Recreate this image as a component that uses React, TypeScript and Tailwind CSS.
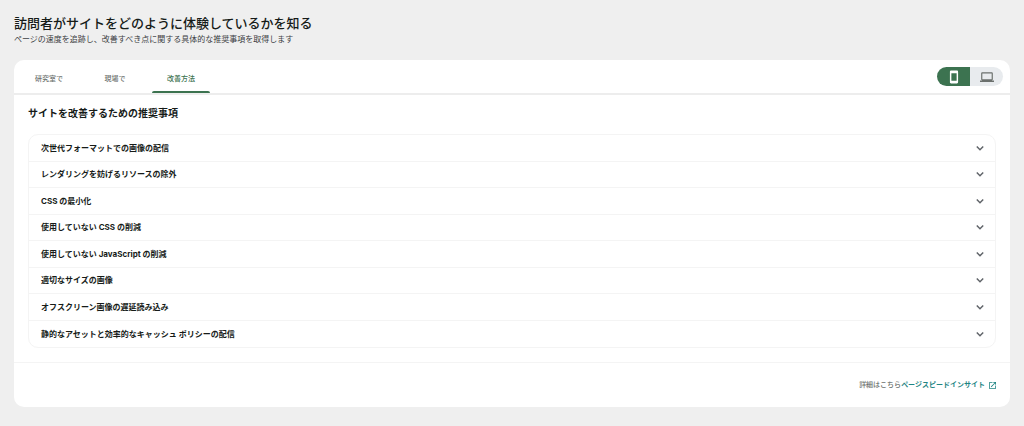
import { useState } from "react";
import clsx from "clsx";

const tabs = ["研究室で", "現場で", "改善方法"];

const recommendations = [
  "次世代フォーマットでの画像の配信",
  "レンダリングを妨げるリソースの除外",
  "CSS の最小化",
  "使用していない CSS の削減",
  "使用していない JavaScript の削減",
  "適切なサイズの画像",
  "オフスクリーン画像の遅延読み込み",
  "静的なアセットと効率的なキャッシュ ポリシーの配信",
];

const PhoneIcon = () => (
  <svg viewBox="0 0 24 24" className="w-3.5 h-3.5" fill="currentColor" aria-hidden="true">
    <path d="M17 1H7c-1.100 0-2 .9-2 2v18c0 1.100.9 2 2 2h10c1.100 0 2-.9 2-2V3c0-1.100-.9-2-2-2zm-.5 17.500h-9v-13h9v13z" />
  </svg>
);

const LaptopIcon = () => (
  <svg viewBox="0 0 24 24" className="w-3.5 h-3.5" fill="currentColor" aria-hidden="true">
    <path d="M20 18c1.1 0 2-.9 2-2V6c0-1.1-.9-2-2-2H4c-1.1 0-2 .9-2 2v10c0 1.1.9 2 2 2H0v2.500h24V18h-4zM4 6h16v10H4V6z" />
  </svg>
);

const ChevronIcon = () => (
  <svg
    viewBox="0 0 24 24"
    className="w-3.5 h-3.5 shrink-0 text-[#5f6368]"
    fill="none"
    stroke="currentColor"
    strokeWidth="2.5"
    aria-hidden="true"
  >
    <path d="M6.500 9.500l5.500 5.500 5.500-5.500" />
  </svg>
);

const ExternalIcon = () => (
  <svg viewBox="3 3 18 18" className="w-[7px] h-[7px]" fill="currentColor" aria-hidden="true">
    <path d="M19 19H5V5h7V3H5c-1.11 0-2 .9-2 2v14c0 1.1.89 2 2 2h14c1.1 0 2-.9 2-2v-7h-2v7zM14 3v2h3.59l-9.83 9.83 1.41 1.41L19 6.41V10h2V3h-7z" />
  </svg>
);

const App = () => {
  const [activeTab, setActiveTab] = useState("改善方法");
  const [device, setDevice] = useState<"mobile" | "desktop">("mobile");

  return (
    <main
      lang="ja"
      className="min-h-screen bg-[#efefef] px-3.5 pt-[15px] pb-[18px] font-['Inter','Noto_Sans_CJK_JP',sans-serif] text-[#161b18]"
    >
      <h1 className="text-[13px] leading-4 font-medium">
        訪問者がサイトをどのように体験しているかを知る
      </h1>
      <p className="mt-0.5 text-[8px] leading-3 text-[#3c4043]">
        ページの速度を追跡し、改善すべき点に関する具体的な推奨事項を取得します
      </p>

      <section className="mt-[15px] rounded-[10px] bg-white">
        <div className="flex items-stretch justify-between border-b-2 border-[#ededed] pl-1.5 pr-[7px]">
          <div role="tablist" className="flex gap-2">
            {tabs.map((tab) => (
              <button
                key={tab}
                type="button"
                role="tab"
                aria-selected={activeTab === tab}
                onClick={() => setActiveTab(tab)}
                className={clsx(
                  "flex w-[58px] flex-col items-center justify-end cursor-pointer text-[7px] leading-3 font-medium",
                  activeTab === tab ? "text-[#3c7350]" : "text-[#6b706d]"
                )}
              >
                {tab}
                <span
                  className={clsx(
                    "mt-1.5 h-0.5 w-full rounded-t-sm",
                    activeTab === tab && "bg-[#3c7350]"
                  )}
                />
              </button>
            ))}
          </div>

          <div className="my-[7px] flex overflow-hidden rounded-full bg-[#e8ebee]">
            <button
              type="button"
              aria-label="モバイル"
              aria-pressed={device === "mobile"}
              onClick={() => setDevice("mobile")}
              className={clsx(
                "flex h-[19px] w-[33px] items-center justify-center cursor-pointer",
                device === "mobile" ? "bg-[#3c7350] text-white" : "text-[#6b706d]"
              )}
            >
              <PhoneIcon />
            </button>
            <button
              type="button"
              aria-label="パソコン"
              aria-pressed={device === "desktop"}
              onClick={() => setDevice("desktop")}
              className={clsx(
                "flex h-[19px] w-[33px] items-center justify-center cursor-pointer",
                device === "desktop" ? "bg-[#3c7350] text-white" : "text-[#6b706d]"
              )}
            >
              <LaptopIcon />
            </button>
          </div>
        </div>

        <div className="px-3.5 pt-3 pb-3.5">
          <h2 className="text-[10px] leading-3 font-bold">
            サイトを改善するための推奨事項
          </h2>
          <ul className="mt-[15px] grid min-h-[214px] auto-rows-fr divide-y divide-[#f4f4f4] rounded-[10px] border border-[#f4f4f4]">
            {recommendations.map((item) => (
              <li key={item} className="flex">
                <button
                  type="button"
                  className="flex flex-1 items-center justify-between pl-3 pr-2 cursor-pointer text-left text-[8px] leading-3 font-bold"
                >
                  {item}
                  <ChevronIcon />
                </button>
              </li>
            ))}
          </ul>
        </div>

        <div className="flex items-center justify-end border-t border-[#f4f4f4] px-3.5 py-4 text-[7px] leading-3 font-medium text-[#6b706d]">
          <span>詳細はこちら</span>
          <a
            href="#pagespeed"
            className="flex items-center gap-1 font-bold text-[#1f8583]"
          >
            ページスピードインサイト
            <ExternalIcon />
          </a>
        </div>
      </section>
    </main>
  );
};

export default App;
